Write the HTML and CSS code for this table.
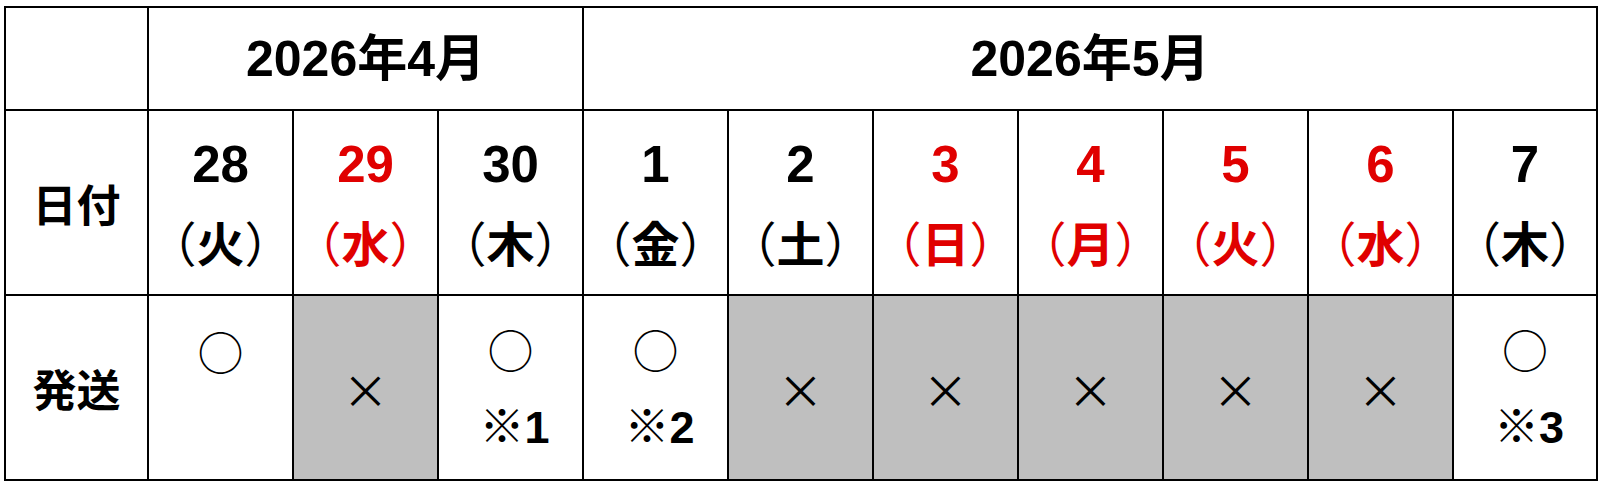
FILE: index.html
```html
<!DOCTYPE html>
<html lang="ja">
<head>
<meta charset="utf-8">
<title>発送スケジュール</title>
<link rel="stylesheet" href="styles.css">
</head>
<body>
<div class="sheet">
  <div class="cell corner"></div>
  <div class="cell month m4">2026年4月</div>
  <div class="cell month m5">2026年5月</div>

  <div class="cell label">日付</div>
  <div class="cell day"><span class="num">28</span><span class="dow"><span class="p">（</span>火<span class="p">）</span></span></div>
  <div class="cell day red"><span class="num">29</span><span class="dow"><span class="p">（</span>水<span class="p">）</span></span></div>
  <div class="cell day"><span class="num">30</span><span class="dow"><span class="p">（</span>木<span class="p">）</span></span></div>
  <div class="cell day"><span class="num">1</span><span class="dow"><span class="p">（</span>金<span class="p">）</span></span></div>
  <div class="cell day"><span class="num">2</span><span class="dow"><span class="p">（</span>土<span class="p">）</span></span></div>
  <div class="cell day red"><span class="num">3</span><span class="dow"><span class="p">（</span>日<span class="p">）</span></span></div>
  <div class="cell day red"><span class="num">4</span><span class="dow"><span class="p">（</span>月<span class="p">）</span></span></div>
  <div class="cell day red"><span class="num">5</span><span class="dow"><span class="p">（</span>火<span class="p">）</span></span></div>
  <div class="cell day red"><span class="num">6</span><span class="dow"><span class="p">（</span>水<span class="p">）</span></span></div>
  <div class="cell day"><span class="num">7</span><span class="dow"><span class="p">（</span>木<span class="p">）</span></span></div>

  <div class="cell label">発送</div>
  <div class="cell ship"><span class="ok">○</span><span class="note">&nbsp;</span></div>
  <div class="cell ship off"><span class="ng">×</span></div>
  <div class="cell ship"><span class="ok">○</span><span class="note"><span class="kome">※</span>1</span></div>
  <div class="cell ship"><span class="ok">○</span><span class="note"><span class="kome">※</span>2</span></div>
  <div class="cell ship off"><span class="ng">×</span></div>
  <div class="cell ship off"><span class="ng">×</span></div>
  <div class="cell ship off"><span class="ng">×</span></div>
  <div class="cell ship off"><span class="ng">×</span></div>
  <div class="cell ship off"><span class="ng">×</span></div>
  <div class="cell ship"><span class="ok">○</span><span class="note"><span class="kome">※</span>3</span></div>
</div>
</body>
</html>
```
FILE: styles.css
```css
html, body {
  margin: 0;
  padding: 0;
  background: #ffffff;
}

body {
  font-family: "Liberation Sans", "Noto Sans CJK JP", sans-serif;
  font-weight: 700;
  color: #000000;
}

.sheet {
  display: grid;
  grid-template-columns: 141px repeat(9, 143px) 142px;
  grid-template-rows: 101px 183px 183px;
  gap: 2px;
  padding: 2px;
  background: #000000;
  width: max-content;
  margin: 6px 0 0 4px;
}

.cell {
  background: #ffffff;
  display: flex;
  flex-direction: column;
  align-items: center;
  justify-content: center;
}

.m4 {
  grid-column: 2 / span 3;
}

.m5 {
  grid-column: 5 / span 7;
}

.month {
  font-size: 50px;
  line-height: 1;
}

.label {
  font-family: "Noto Sans CJK JP", sans-serif;
  font-size: 44px;
  line-height: 1;
}

.day .num {
  font-family: "Liberation Sans", sans-serif;
  font-size: 51px;
  line-height: 76px;
}

.day .dow {
  font-family: "Noto Sans CJK JP", sans-serif;
  font-size: 48px;
  line-height: 76px;
}

.dow .p {
  font-weight: 400;
  font-feature-settings: "halt";
}

.red {
  color: #e00000;
}

.ship {
  font-family: "Noto Sans CJK JP", sans-serif;
}

.ship .ok {
  font-weight: 400;
  font-size: 46px;
  line-height: 76px;
}

.ship .note {
  font-family: "Liberation Sans", "Noto Sans CJK JP", sans-serif;
  font-size: 45px;
  line-height: 76px;
  padding-left: 8px;
}

.kome {
  font-family: "Noto Sans CJK JP", sans-serif;
  font-weight: 400;
}

.ship .ng {
  font-weight: 400;
  font-size: 46px;
  line-height: 1;
}

.off {
  background: #bfbfbf;
}
```
